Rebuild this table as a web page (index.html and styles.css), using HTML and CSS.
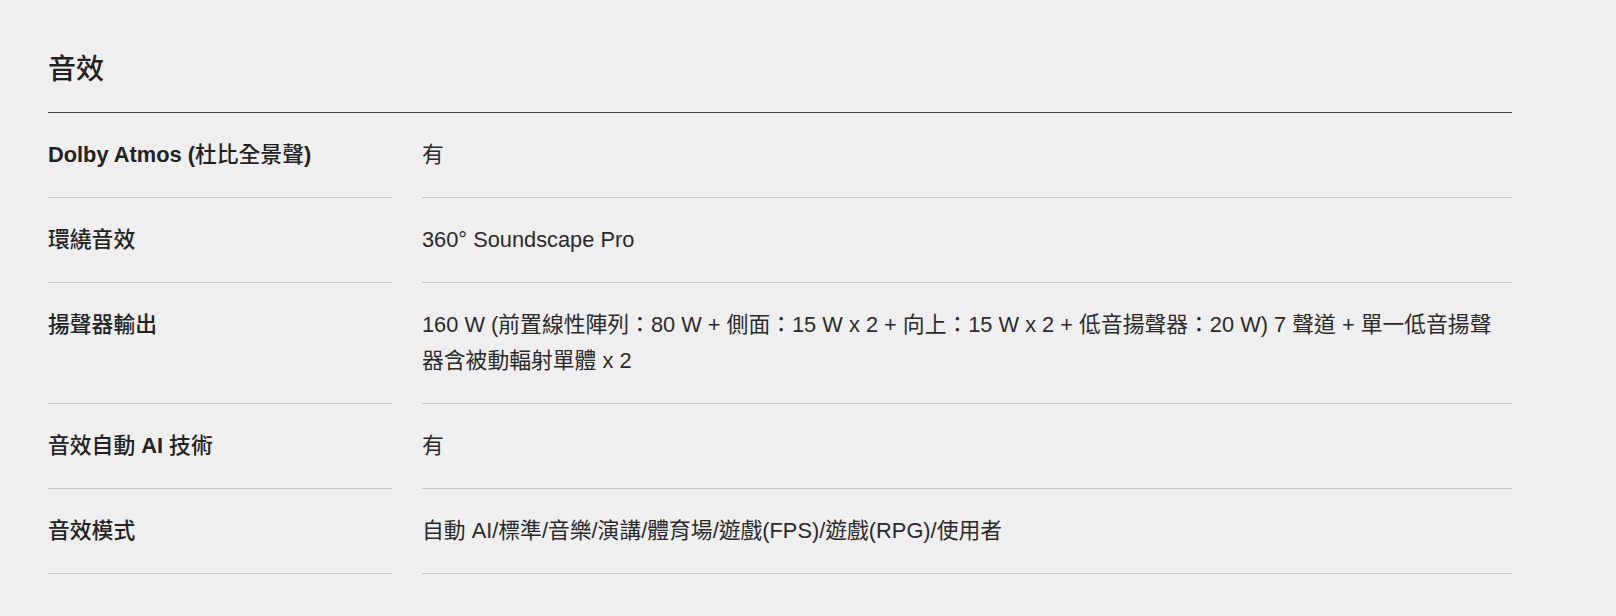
FILE: index.html
```html
<!DOCTYPE html>
<html lang="zh-Hant">
<head>
<meta charset="utf-8">
<link rel="stylesheet" href="styles.css">
</head>
<body>
<section class="specs">
  <h2 class="specs-title">音效</h2>
  <div class="spec-table">
    <div class="spec-label"><b>Dolby Atmos (</b>杜比全景聲<b>)</b></div>
    <div class="spec-value">有</div>
    <div class="spec-label">環繞音效</div>
    <div class="spec-value">360° Soundscape Pro</div>
    <div class="spec-label">揚聲器輸出</div>
    <div class="spec-value">160 W (前置線性陣列：80 W + 側面：15 W x 2 + 向上：15 W x 2 + 低音揚聲器：20 W) 7 聲道 + 單一低音揚聲器含被動輻射單體 x 2</div>
    <div class="spec-label">音效自動 <b>AI</b> 技術</div>
    <div class="spec-value">有</div>
    <div class="spec-label">音效模式</div>
    <div class="spec-value">自動 AI/標準/音樂/演講/體育場/遊戲(FPS)/遊戲(RPG)/使用者</div>
  </div>
</section>
</body>
</html>
```
FILE: styles.css
```css
html, body {
  margin: 0;
  padding: 0;
  background: #efefef;
}
body {
  font-family: "Liberation Sans", "Noto Sans CJK TC", sans-serif;
  color: #222;
}
.specs {
  padding: 0 0 0 48px;
  width: 1464px;
}
.specs-title {
  margin: 0;
  padding-top: 50px;
  padding-bottom: 22px;
  font-size: 28px;
  line-height: 40px;
  font-weight: 500;
  color: #222;
}
.spec-table {
  border-top: 1px solid #4a4a4a;
  display: grid;
  grid-template-columns: 344px 1090px;
  column-gap: 30px;
}
.spec-label,
.spec-value {
  padding: 24px 0 24px;
  font-size: 21.8px;
  line-height: 36px;
  border-bottom: 1px solid #c6c6c6;
}
.spec-label {
  font-weight: 500;
}
.spec-label b {
  font-weight: 700;
}
.spec-value {
  color: #2a2a2a;
}
```
